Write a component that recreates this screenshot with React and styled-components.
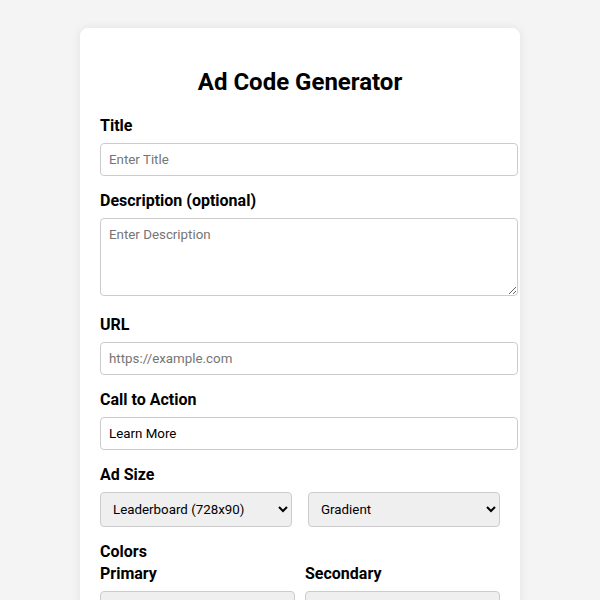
import React from "react";
import styled, { createGlobalStyle } from "styled-components";

const Global = createGlobalStyle`
  html, body { margin: 0; padding: 0; background: #f4f4f4; }
  body { font-family: Roboto, "Liberation Sans", Arial, sans-serif; color: #111; }
`;

const Page = styled.div`
  padding: 28px 0;
  display: flex;
  justify-content: center;
`;

const Card = styled.div`
  width: 440px;
  box-sizing: border-box;
  background: #fff;
  border-radius: 8px;
  padding: 20px;
  box-shadow: 0 0 10px rgba(0, 0, 0, 0.08);
`;

const Heading = styled.h1`
  font-size: 24px;
  font-weight: 700;
  text-align: center;
  margin: 20px 0;
  color: #000;
`;

const Group = styled.div`
  padding-bottom: 15px;
`;

const Label = styled.label`
  display: block;
  font-size: 16px;
  font-weight: 700;
  margin-bottom: ${(p) => (p.$tight ? "3px" : "8px")};
  color: #000;
`;

const TextInput = styled.input`
  display: block;
  width: 100%;
  padding: 8px;
  border: 1px solid #ccc;
  border-radius: 4px;
  font-family: Roboto, "Liberation Sans", Arial, sans-serif;
  font-size: 13.333px;
  color: #000;
  background: #fff;
  &::placeholder { color: #757575; }
`;

const TextArea = styled.textarea`
  display: block;
  width: 100%;
  height: 60px;
  margin: 0 0 4px;
  padding: 8px;
  border: 1px solid #ccc;
  border-radius: 4px;
  font-family: Roboto, "Liberation Sans", Arial, sans-serif;
  font-size: 13.333px;
  color: #000;
  &::placeholder { color: #757575; }
`;

const Row = styled.div`
  display: flex;
  justify-content: space-between;
`;

const Select = styled.select`
  width: 48%;
  padding: 8px;
  border: 1px solid #ccc;
  border-radius: 4px;
  background: #efefef;
  font-family: Roboto, "Liberation Sans", Arial, sans-serif;
  font-size: 13.333px;
  color: #000;
`;

const ColorGrid = styled.div`
  display: grid;
  grid-template-columns: 1fr 1fr;
  gap: 10px;
`;

const ColorInput = styled.input`
  display: block;
  width: 100%;
  box-sizing: border-box;
  height: 44px;
  padding: 12px;
  border: 1px solid #ccc;
  border-radius: 4px;
  background: #efefef;
`;

export default function App() {
  return (
    <>
      <Global />
      <Page>
        <Card>
          <Heading>Ad Code Generator</Heading>
          <Group>
            <Label>Title</Label>
            <TextInput type="text" placeholder="Enter Title" />
          </Group>
          <Group>
            <Label>Description (optional)</Label>
            <TextArea placeholder="Enter Description" />
          </Group>
          <Group>
            <Label>URL</Label>
            <TextInput type="text" placeholder="https://example.com" />
          </Group>
          <Group>
            <Label>Call to Action</Label>
            <TextInput type="text" defaultValue="Learn More" />
          </Group>
          <Group>
            <Label>Ad Size</Label>
            <Row>
              <Select defaultValue="leaderboard">
                <option value="leaderboard">Leaderboard (728x90)</option>
                <option value="rect">Medium Rectangle (300x250)</option>
              </Select>
              <Select defaultValue="gradient">
                <option value="gradient">Gradient</option>
                <option value="solid">Solid</option>
              </Select>
            </Row>
          </Group>
          <Group>
            <Label $tight>Colors</Label>
            <ColorGrid>
              <div>
                <Label>Primary</Label>
                <ColorInput type="color" defaultValue="#4a90e2" />
              </div>
              <div>
                <Label>Secondary</Label>
                <ColorInput type="color" defaultValue="#50e3c2" />
              </div>
            </ColorGrid>
          </Group>
        </Card>
      </Page>
    </>
  );
}
